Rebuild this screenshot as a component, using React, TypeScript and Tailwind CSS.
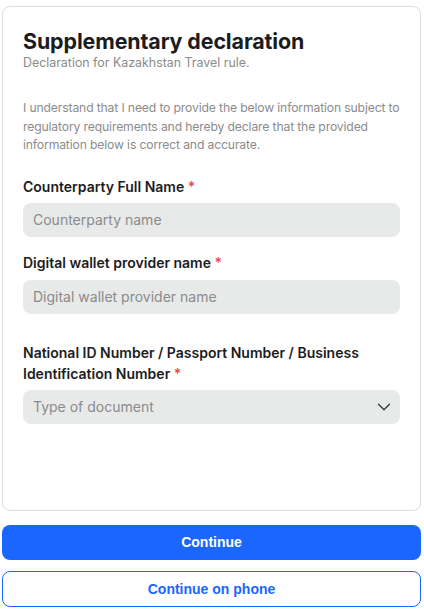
import { ChevronDown } from "lucide-react";

function Label({ children }: { children: React.ReactNode }) {
  return (
    <label className="block text-[14px] font-semibold leading-[21px] text-[#1c1c1e]">
      {children} <span className="text-[#f04848]">*</span>
    </label>
  );
}

function Field({ placeholder }: { placeholder: string }) {
  return (
    <input
      placeholder={placeholder}
      className="block h-[34px] w-full rounded-lg bg-[#e8e9e9] px-[10px] text-[14px] text-[#1c1c1e] outline-none placeholder:text-[#8b8b8b]"
    />
  );
}

export default function App() {
  return (
    <div
      className="flex min-h-[614px] w-[424px] flex-col bg-white pl-[2px] pr-[3px] pt-[6px]"
      style={{ fontFamily: "Inter, 'Noto Sans', sans-serif" }}
    >
      {/* Declaration card */}
      <div className="h-[505px] rounded-lg border border-[#dcdcdc] px-5 pt-5">
        <h1 className="text-[21.4px] font-bold leading-[28px] tracking-[-0.1px] text-[#1c1c1e]">
          Supplementary declaration
        </h1>
        <p className="text-[12.4px] leading-[16px] text-[#8b8b8b]">Declaration for Kazakhstan Travel rule.</p>

        <p className="-mr-[8px] mt-[28px] text-[12.2px] leading-[18.5px] tracking-[-0.15px] text-[#8b8b8b]">
          I understand that I need to provide the below information subject to regulatory requirements and hereby
          declare that the provided information below is correct and accurate.
        </p>

        <div className="mt-[21px]">
          <Label>Counterparty Full Name</Label>
          <div className="mt-[6px]">
            <Field placeholder="Counterparty name" />
          </div>
        </div>

        <div className="mt-[15px]">
          <Label>Digital wallet provider name</Label>
          <div className="mt-[7px]">
            <Field placeholder="Digital wallet provider name" />
          </div>
        </div>

        <div className="mt-[28px]">
          <Label>National ID Number / Passport Number / Business Identification Number</Label>
          <button className="mt-[6px] flex h-[34px] w-full items-center justify-between rounded-lg bg-[#e8e9e9] pl-[10px] pr-[5px] text-left text-[14px] text-[#8b8b8b]">
            <span>Type of document</span>
            <ChevronDown size={22} strokeWidth={1.3} className="text-[#333]" />
          </button>
        </div>
      </div>

      <button
        className="mt-[14px] h-[35px] w-full rounded-lg bg-[#1a66ff] text-[14px] font-bold text-white"
        style={{ fontFamily: "'Liberation Sans', Arial, sans-serif" }}
      >
        Continue
      </button>
      <button
        className="mt-[11px] h-[36px] w-full rounded-lg border border-[#1a66ff] bg-white text-[14px] font-bold text-[#1a66ff]"
        style={{ fontFamily: "'Liberation Sans', Arial, sans-serif" }}
      >
        Continue on phone
      </button>
    </div>
  );
}
